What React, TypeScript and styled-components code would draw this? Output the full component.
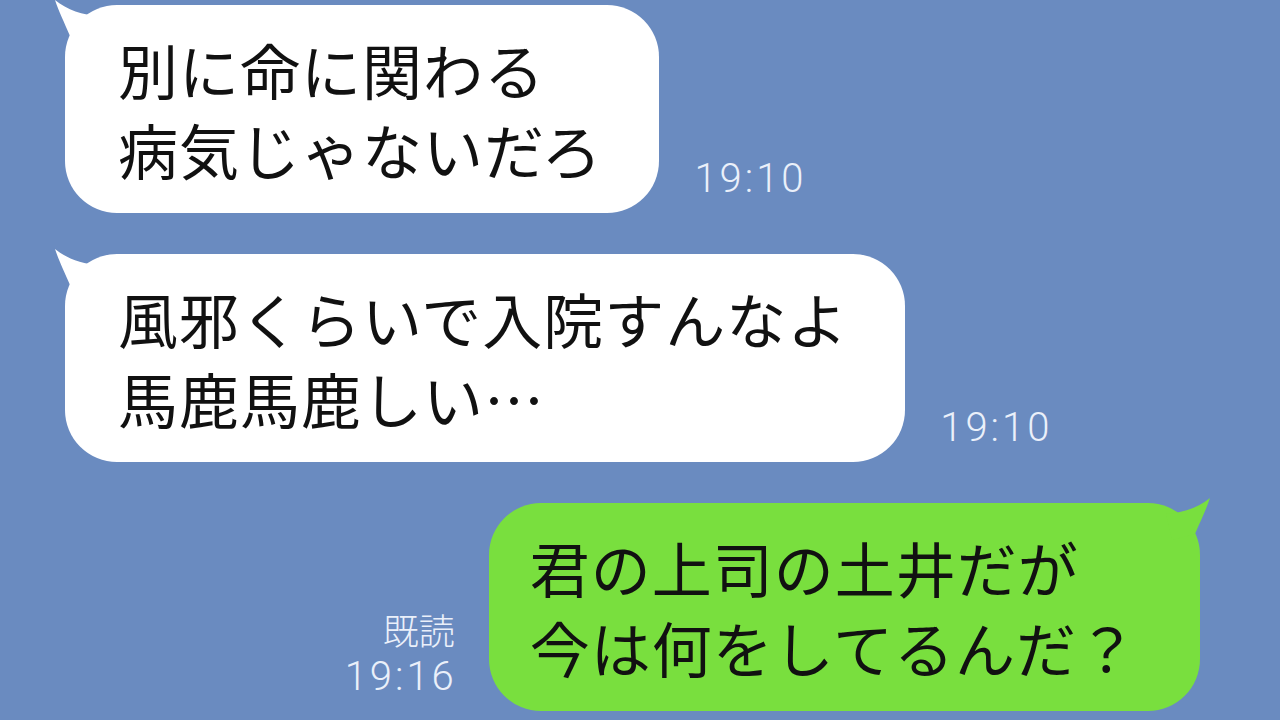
import React from "react";
import styled, { createGlobalStyle } from "styled-components";

const Global = createGlobalStyle`
  html, body { margin: 0; padding: 0; background: #6a8bc0; }
  body { width: 1280px; height: 720px; overflow: hidden; }
`;

const Page = styled.div`
  width: 1280px;
  height: 720px;
  box-sizing: border-box;
  padding: 5px 80px 0 65px;
  background: #6a8bc0;
  display: flex;
  flex-direction: column;
  gap: 41px;
  font-family: "Noto Sans CJK JP", "Noto Sans", sans-serif;
`;

const Row = styled.div<{ $out?: boolean }>`
  display: flex;
  align-items: flex-end;
  justify-content: ${(p) => (p.$out ? "flex-end" : "flex-start")};
  gap: ${(p) => (p.$out ? 32 : 35)}px;
`;

const Bubble = styled.div<{ $out?: boolean }>`
  position: relative;
  background: ${(p) => (p.$out ? "#79df3e" : "#ffffff")};
  border-radius: 52px;
  padding: ${(p) => (p.$out ? "24px 62px 24px 41px" : "24px 57px 24px 53px")};
  color: #111;
  font-size: 60px;
  line-height: 80px;
  letter-spacing: 1px;
  white-space: nowrap;
`;

const TailSvg = styled.svg<{ $out?: boolean }>`
  position: absolute;
  top: -5px;
  width: 50px;
  height: 50px;
  ${(p) => (p.$out ? "right: -12px; transform: scaleX(-1);" : "left: -12px;")}
`;

const Meta = styled.div`
  display: flex;
  flex-direction: column;
  align-items: flex-end;
  margin-bottom: 14px;
  color: #eaf0fa;
`;

const Read = styled.div`
  font-family: "Noto Sans CJK JP", sans-serif;
  font-weight: 300;
  font-size: 36px;
  line-height: 1;
  margin-bottom: 10px;
  margin-right: 2px;
`;

const Time = styled.div`
  font-family: Roboto, "Noto Sans", sans-serif;
  font-weight: 300;
  font-size: 40px;
  line-height: 1;
  letter-spacing: 3px;
`;

function Tail({ out, color }: { out?: boolean; color: string }) {
  return (
    <TailSvg $out={out} viewBox="0 0 50 50">
      <path d="M2 0 C 6 12 11 22 17 36 L 40 42 L 46 16 C 30 15 14 10 2 0 Z" fill={color} />
    </TailSvg>
  );
}

export default function App() {
  return (
    <>
      <Global />
      <Page>
        <Row>
          <Bubble>
            <Tail color="#ffffff" />
            別に命に関わる
            <br />
            病気じゃないだろ
          </Bubble>
          <Meta>
            <Time>19:10</Time>
          </Meta>
        </Row>
        <Row>
          <Bubble>
            <Tail color="#ffffff" />
            風邪くらいで入院すんなよ
            <br />
            馬鹿馬鹿しい…
          </Bubble>
          <Meta>
            <Time>19:10</Time>
          </Meta>
        </Row>
        <Row $out>
          <Meta>
            <Read>既読</Read>
            <Time>19:16</Time>
          </Meta>
          <Bubble $out>
            <Tail out color="#79df3e" />
            君の上司の土井だが
            <br />
            今は何をしてるんだ？
          </Bubble>
        </Row>
      </Page>
    </>
  );
}
